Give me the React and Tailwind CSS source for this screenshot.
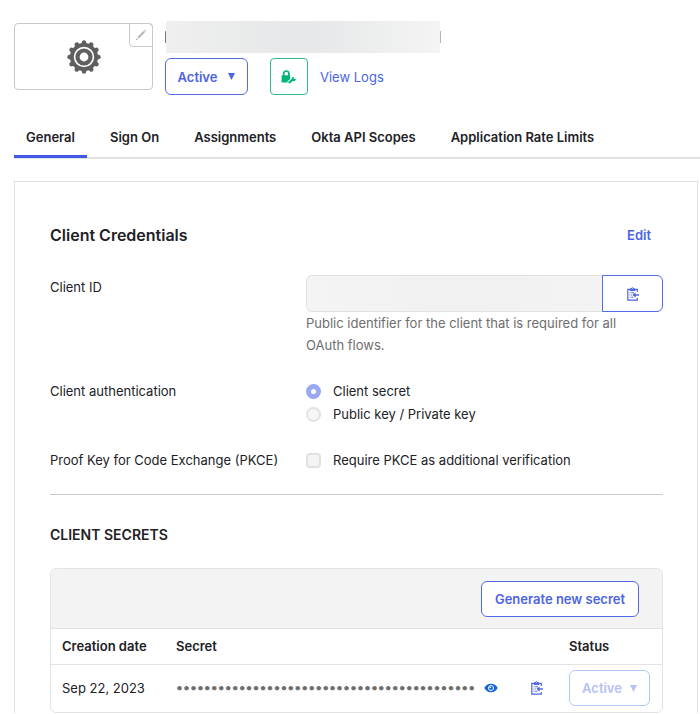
import React from "react";

const TABS = ["General", "Sign On", "Assignments", "Okta API Scopes", "Application Rate Limits"];
const TEETH = [0, 30, 60, 90, 120, 150, 180, 210, 240, 270, 300, 330];

function GearIcon() {
  return (
    <svg width="34" height="34" viewBox="0 0 34 34" aria-hidden="true">
      <g fill="#5f5f5f">
        {TEETH.map((a) => (
          <path key={a} d="M14 5 L15.2 1 Q17 -0.4 18.8 1 L20 5 Z" transform={`rotate(${a} 17 17)`} />
        ))}
      </g>
      <circle cx="17" cy="17" r="12.1" fill="none" stroke="#5f5f5f" strokeWidth="3.8" />
      <circle cx="17" cy="17" r="6.5" fill="none" stroke="#5f5f5f" strokeWidth="4.2" />
    </svg>
  );
}

function PencilIcon() {
  return (
    <svg width="12" height="12" viewBox="0 0 12 12" aria-hidden="true">
      <path d="M3.2 8.8 L9.2 2.6" stroke="#b4b4b8" strokeWidth="2" fill="none" />
      <path d="M9.6 2.2 L10.4 1.4" stroke="#b4b4b8" strokeWidth="2" fill="none" />
      <path d="M0.8 11.2 L1.5 8.9 L3.1 10.5 Z" fill="#b4b4b8" />
    </svg>
  );
}

function LockKeyIcon() {
  return (
    <svg width="16" height="14" viewBox="0 0 16 14" aria-hidden="true">
      <path d="M2.7 6 V3.8 a2.6 2.8 0 0 1 5.2 0 V6" fill="none" stroke="#00b377" strokeWidth="1.7" />
      <path d="M1.5 5.2 H8.2 Q9.2 5.2 9.2 6.2 V9 L6.6 11.2 V12.6 H1.5 Q0.6 12.6 0.6 11.7 V6.2 Q0.6 5.2 1.5 5.2 Z" fill="#00b377" />
      <path d="M8.4 12.4 L12 9.5" stroke="#00b377" strokeWidth="2.2" strokeLinecap="round" />
      <circle cx="12.6" cy="9.2" r="2.1" fill="#00b377" />
      <path d="M12.6 9.2 L13.4 6.4 L15.6 8.2 Z" fill="#fff" />
    </svg>
  );
}

function ClipboardIcon() {
  return (
    <svg width="12" height="14" viewBox="0 0 12 14" aria-hidden="true" fill="none" stroke="#4c64e1">
      <path d="M10.3 5 V2.4 H0.8 V13.2 H10.3 V11" strokeWidth="1.2" />
      <path d="M3 3.6 V2 H4.3 Q4.3 0.7 5.5 0.7 Q6.7 0.7 6.7 2 H8 V3.6 Z" strokeWidth="1" />
      <path d="M2.5 5.8 H3.4 M4.2 5.8 H7 M2.5 8 H3.4 M4.2 8 H5 M2.5 10.2 H3.4 M4.2 10.2 H6.4" strokeWidth="1" />
      <path d="M7 8 H12" strokeWidth="1.4" />
      <path d="M8.6 5.4 V10.6 L5.4 8 Z" fill="#4c64e1" stroke="none" />
    </svg>
  );
}

function EyeIcon() {
  return (
    <svg width="14" height="10" viewBox="0 0 14 10" aria-hidden="true">
      <path d="M0.3 5 C3 -0.6 11 -0.6 13.7 5 C11 10.6 3 10.6 0.3 5 Z" fill="#1662dd" />
      <circle cx="7" cy="5" r="2.5" fill="none" stroke="#fff" strokeWidth="1" />
      <path d="M7 5 V3.4 A1.6 1.6 0 0 0 5.4 5 Z" fill="#fff" />
    </svg>
  );
}

function Caret() {
  return (
    <svg width="7" height="7" viewBox="0 0 7 7" aria-hidden="true" fill="currentColor">
      <path d="M0 0 H7 L3.5 7 Z" />
    </svg>
  );
}

function Header() {
  return (
    <header className="flex gap-3 pl-3.5">
      <div className="relative mt-0.5 flex h-[67px] w-[139px] shrink-0 items-center justify-center rounded border border-[#c9c9cd]">
        <GearIcon />
        <button aria-label="Edit logo" className="absolute -top-px -right-px flex size-6 items-center justify-center rounded-tr rounded-bl border border-[#c9c9cd]">
          <PencilIcon />
        </button>
      </div>
      <div>
        <div className="flex items-center">
          <span className="h-3 w-px rounded-full bg-[#77777a]" />
          <div className="h-8 w-[274px] bg-linear-to-r from-[#efefef] via-[#e5e7e8] to-[#f4f4f4]" />
          <span className="h-3 w-px bg-[#b5b5b5]" />
        </div>
        <div className="mt-[5px] flex items-center">
          <button className="flex h-[37px] w-[83px] items-center justify-center gap-[11px] rounded-md border border-[#546be7] font-semibold text-[#4c64e1]">
            Active
            <Caret />
          </button>
          <button aria-label="App authentication" className="ml-[22px] flex h-[37px] w-[38px] items-center justify-center rounded border border-[#2bbd8a]">
            <LockKeyIcon />
          </button>
          <a href="#logs" className="ml-3 text-[#4c64e1]">View Logs</a>
        </div>
      </div>
    </header>
  );
}

function Tabs() {
  return (
    <nav className="mt-6 ml-3.5 flex gap-[11px] border-b-2 border-[#e1e1e1]">
      {TABS.map((tab, i) => (
        <a
          key={tab}
          href="#tab"
          className={`-mb-px flex h-[39px] items-center border-b-3 px-3 font-semibold whitespace-nowrap ${i === 0 ? "border-[#4259e5]" : "border-transparent"}`}
        >
          {tab}
        </a>
      ))}
    </nav>
  );
}

function Credentials() {
  return (
    <section>
      <div className="flex items-center justify-between pr-3">
        <h2 className="text-base leading-6 font-semibold">Client Credentials</h2>
        <a href="#edit" className="font-semibold text-[#4c64e1]">Edit</a>
      </div>
      <div className="mt-7 grid grid-cols-[256px_minmax(0,1fr)]">
        <label htmlFor="client-id" className="leading-6">Client ID</label>
        <div>
          <div className="flex h-[37px]">
            <input id="client-id" readOnly className="min-w-0 flex-1 rounded-l-md border border-r-0 border-[#e1e1e1] bg-[#f3f3f3] bg-linear-to-r from-[#f4f4f4] via-[#f1f1f1] to-[#f3f3f3] px-3" />
            <button aria-label="Copy client ID" className="flex w-[61px] items-center justify-center rounded-r-md border border-[#546be7]">
              <ClipboardIcon />
            </button>
          </div>
          <p className="leading-[22px] text-[#6e6e6e]">Public identifier for the client that is required for all <br />OAuth flows.</p>
        </div>
      </div>
      <fieldset className="mt-6 grid grid-cols-[256px_minmax(0,1fr)] leading-[23px]">
        <legend className="contents"><span>Client authentication</span></legend>
        <div>
          <label className="flex items-center gap-3">
            <input type="radio" name="auth" disabled defaultChecked className="size-[15px] appearance-none rounded-full border-[5px] border-[#9aa7f2] bg-white" />
            Client secret
          </label>
          <label className="flex items-center gap-3">
            <input type="radio" name="auth" disabled className="size-[15px] appearance-none rounded-full border-2 border-[#e3e3e3] bg-[#f6f6f6]" />
            Public key / Private key
          </label>
        </div>
      </fieldset>
      <div className="mt-[23px] grid grid-cols-[256px_minmax(0,1fr)] leading-[23px]">
        <span className="whitespace-nowrap">Proof Key for Code Exchange (PKCE)</span>
        <label className="flex items-center gap-3">
          <input type="checkbox" disabled className="size-[15px] appearance-none rounded border-2 border-[#e1e1e1] bg-[#f4f4f4]" />
          Require PKCE as additional verification
        </label>
      </div>
    </section>
  );
}

function Secrets() {
  return (
    <section className="mt-[22px] border-t border-[#c8c8cc] pt-[29px]">
      <h3 className="text-sm leading-[22px] font-semibold">CLIENT SECRETS</h3>
      <div className="mt-[22px] rounded-md border border-[#e3e3e3]">
        <div className="flex h-[60px] items-center justify-end rounded-t-md border-b border-[#e3e3e3] bg-[#f3f3f3] pr-[23px]">
          <button className="h-9 w-[158px] rounded-md border border-[#546be7] bg-white font-semibold text-[#4c64e1]">Generate new secret</button>
        </div>
        <table className="w-full table-fixed text-left">
          <thead>
            <tr className="h-[35px] border-b border-[#e3e3e3]">
              <th className="w-[114px] pl-[11px] font-semibold">Creation date</th>
              <th className="pl-[11px] font-semibold">Secret</th>
              <th className="w-[93px] font-semibold">Status</th>
            </tr>
          </thead>
          <tbody>
            <tr className="h-12">
              <td className="pl-[11px] whitespace-nowrap">Sep 22, 2023</td>
              <td className="pl-[11px]">
                <div className="flex items-center">
                  <span className="w-[308px] shrink-0 font-['Lato',sans-serif] text-xs leading-6 text-[#6e6e6e]">•••••••••••••••••••••••••••••••••••••••••••</span>
                  <button aria-label="Show secret"><EyeIcon /></button>
                  <button aria-label="Copy secret" className="ml-[33px]"><ClipboardIcon /></button>
                </div>
              </td>
              <td>
                <button disabled className="flex h-9 w-[81px] items-center justify-center gap-2 rounded-md border border-[#b3c8f5] font-semibold text-[#b7c1f6]">
                  Active
                  <Caret />
                </button>
              </td>
            </tr>
          </tbody>
        </table>
      </div>
    </section>
  );
}

export default function App() {
  return (
    <div className="min-h-screen bg-white pt-[21px] font-['Inter',sans-serif] text-[13px] leading-5 text-[#212126]">
      <Header />
      <Tabs />
      <main className="mt-[22px] mr-0.5 ml-3.5 border border-b-0 border-[#e1e1e1] pt-[41px] pr-[34px] pl-[35px]">
        <Credentials />
        <Secrets />
      </main>
    </div>
  );
}
